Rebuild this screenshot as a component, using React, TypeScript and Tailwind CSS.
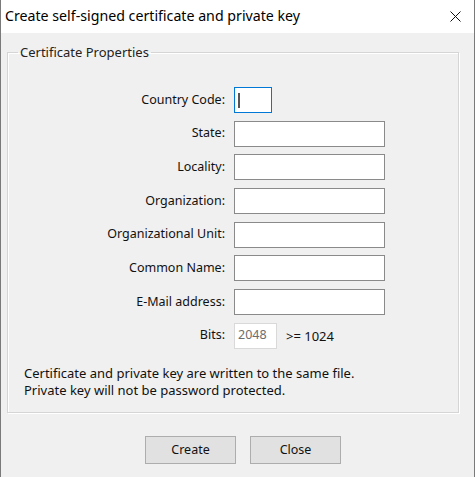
import React from 'react';

const fields = [
    { label: 'Country Code:', short: true },
    { label: 'State:' },
    { label: 'Locality:' },
    { label: 'Organization:' },
    { label: 'Organizational Unit:' },
    { label: 'Common Name:' },
    { label: 'E-Mail address:' },
];

const App: React.FC = () => {
    return (
        <div
            className="w-[475px] h-[477px] flex flex-col bg-[#f0f0f0] border-x border-[#7a7a7a] text-[#000] overflow-hidden"
            style={{ fontFamily: '"Noto Sans", "Open Sans", sans-serif' }}
        >
            {/* Title bar */}
            <div className="h-[33px] shrink-0 bg-white flex items-center justify-between pl-[4px] pr-[13px]">
                <span className="text-[14.2px] leading-none text-black">Create self-signed certificate and private key</span>
                <svg width="11" height="11" viewBox="0 0 11 11">
                    <path d="M0.5 0.5 L10.5 10.5 M10.5 0.5 L0.5 10.5" stroke="#111" strokeWidth="1" />
                </svg>
            </div>

            {/* Body */}
            <div className="flex-1 flex flex-col px-[6px] pt-[11px]">
                <fieldset className="border border-[#d5d5d5] shadow-[inset_1px_1px_0_#fff,1px_1px_0_#fff] w-[452px] h-[369px] px-[16px]">
                    <legend className="text-[13px] leading-[16px] text-[#222] px-[2px] ml-[-6px]">Certificate Properties</legend>

                    <div className="grid grid-cols-[201px_auto] gap-x-[9px] gap-y-[7.67px] items-center mt-[27px] text-[12.5px] text-[#111]">
                        {fields.map(f => (
                            <React.Fragment key={f.label}>
                                <span className="text-right">{f.label}</span>
                                {f.short ? (
                                    <div className="w-[38px] h-[26px] bg-white border border-[#0078d7] flex items-center pl-[3px]">
                                        <div className="w-[2px] h-[15px] bg-[#555]" />
                                    </div>
                                ) : (
                                    <div className="w-[151px] h-[26px] bg-white border border-[#8a8a8a]" />
                                )}
                            </React.Fragment>
                        ))}
                        <span className="text-right">Bits:</span>
                        <div className="flex items-center gap-[9px]">
                            <div className="w-[43px] h-[26px] bg-white border border-[#d9d9d9] flex items-center pl-[3px] text-[#6d6d6d]">2048</div>
                            <span className="pt-[2px] text-[13px]">&gt;= 1024</span>
                        </div>
                    </div>

                    <div className="mt-[16px] text-[13px] leading-[17px] text-[#111]">
                        <p>Certificate and private key are written to the same file.</p>
                        <p>Private key will not be password protected.</p>
                    </div>
                </fieldset>

                <div className="flex gap-[14px] pl-[138px] mt-[23px] text-[12.5px]">
                    <button className="w-[91px] h-[28px] bg-[#e1e1e1] border border-[#adadad] text-[#111]">Create</button>
                    <button className="w-[91px] h-[28px] bg-[#e1e1e1] border border-[#adadad] text-[#111]">Close</button>
                </div>
            </div>
        </div>
    );
};

export default App;
